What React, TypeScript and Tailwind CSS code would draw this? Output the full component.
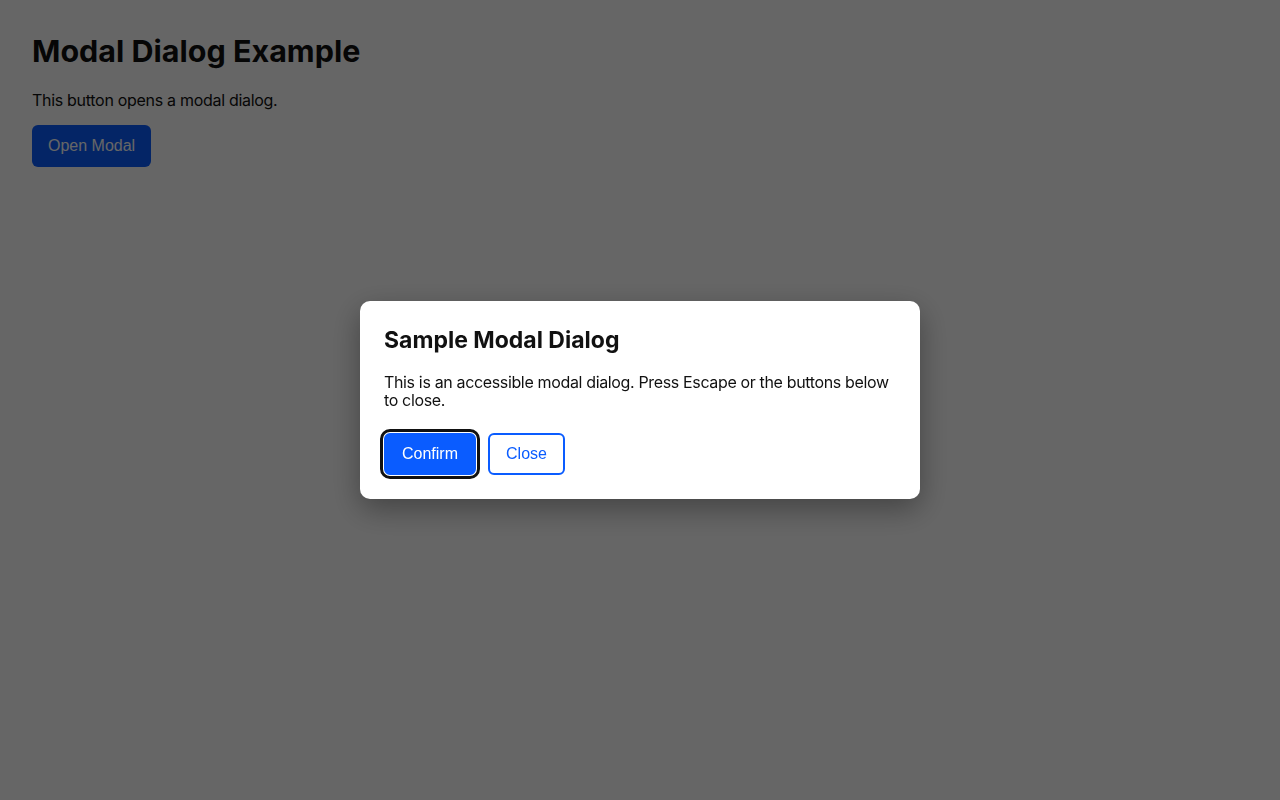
import { useState } from 'react';

const btnFont = { fontFamily: '"Liberation Sans", Arial, sans-serif' };

export default function App() {
  const [open, setOpen] = useState(true);

  return (
    <div className="min-h-screen bg-white p-8 font-['Inter',sans-serif] text-[#111]">
      <h1 className="text-[30.5px] font-bold leading-[38px]">Modal Dialog Example</h1>
      <p className="mt-[21px] text-base leading-[18px] tracking-[-0.3px]">This button opens a modal dialog.</p>
      <button
        type="button"
        onClick={() => setOpen(true)}
        style={btnFont}
        className="mt-4 rounded-md bg-[#0a5cff] px-4 py-3 text-base leading-[18px] text-white"
      >
        Open Modal
      </button>

      {open && (
        <div className="fixed inset-0 flex items-center justify-center bg-[rgba(0,0,0,0.6)]">
          <div
            role="dialog"
            aria-modal="true"
            aria-labelledby="modal-title"
            className="w-[560px] rounded-[10px] bg-white p-6 shadow-[0_10px_30px_rgba(0,0,0,0.35)]"
          >
            <h2 id="modal-title" className="text-[23px] font-bold leading-[30px] text-[#111]">
              Sample Modal Dialog
            </h2>
            <p className="mt-[18px] text-base leading-[18px] tracking-[-0.35px] text-[#111]">
              This is an accessible modal dialog. Press Escape or the buttons below to close.
            </p>
            <div className="mt-6 flex gap-3">
              <button
                type="button"
                onClick={() => setOpen(false)}
                style={btnFont}
                className="rounded-md border-2 border-[#0a5cff] bg-[#0a5cff] px-4 py-2.5 text-base leading-[18px] text-white outline-[3px] outline-offset-1 outline-[#111] outline-solid"
              >
                Confirm
              </button>
              <button
                type="button"
                onClick={() => setOpen(false)}
                style={btnFont}
                className="rounded-md border-2 border-[#0a5cff] bg-white px-4 py-2.5 text-base leading-[18px] text-[#0a5cff]"
              >
                Close
              </button>
            </div>
          </div>
        </div>
      )}
    </div>
  );
}
